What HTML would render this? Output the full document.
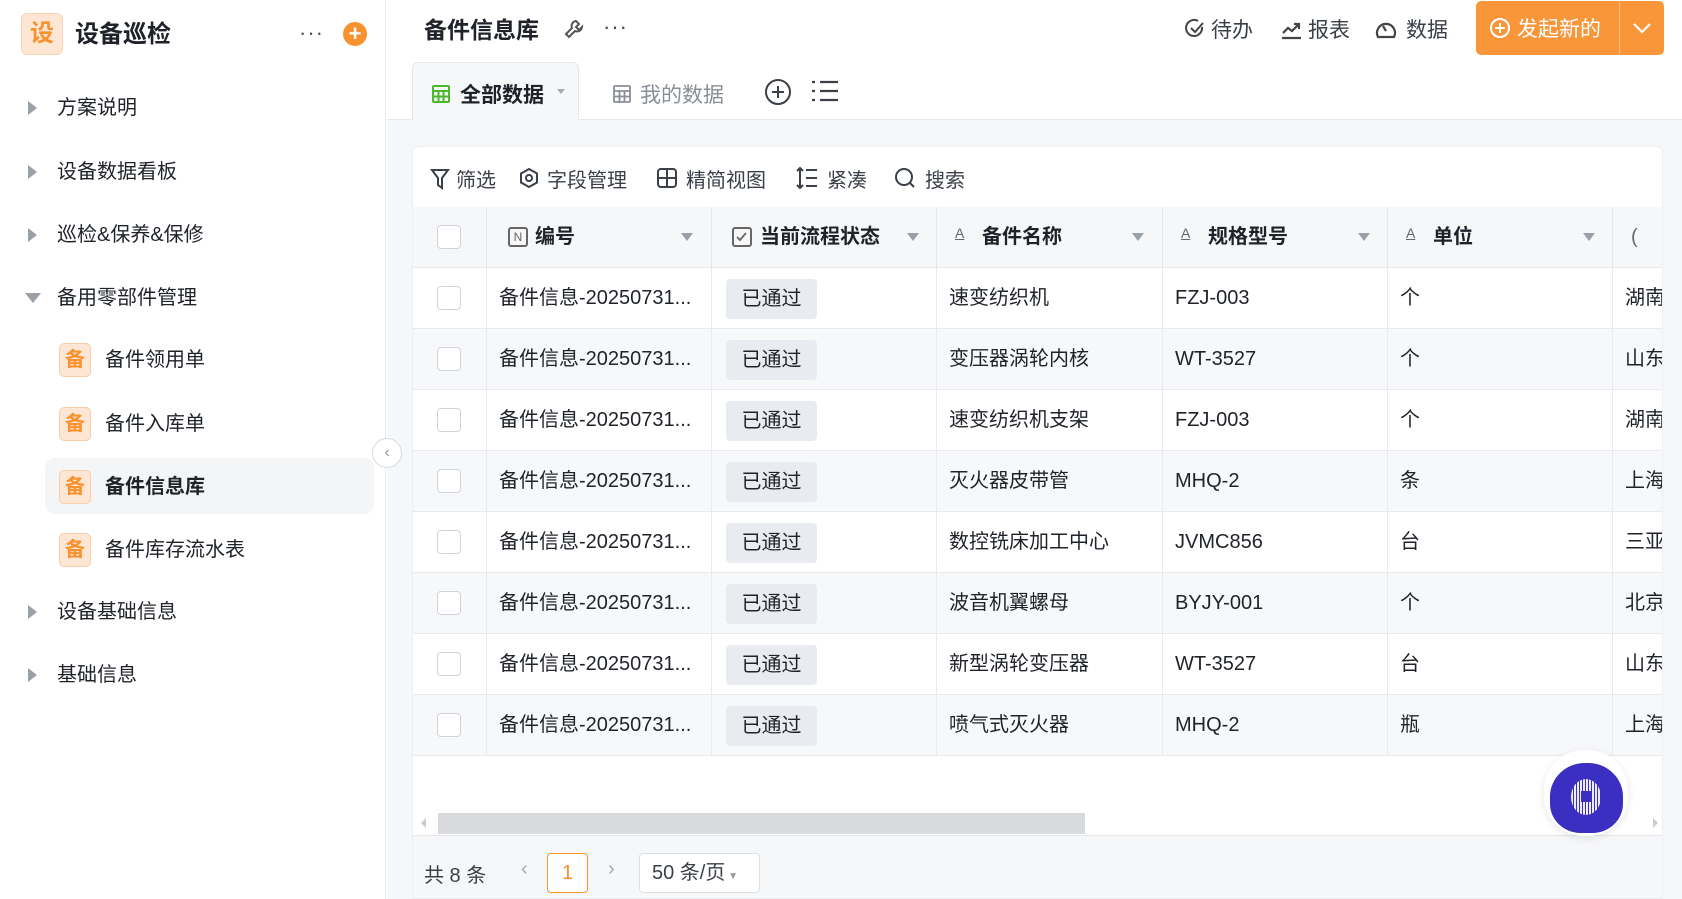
<!DOCTYPE html>
<html><head><meta charset="utf-8"><style>
*{box-sizing:border-box;margin:0;padding:0}
body{width:1682px;height:899px;overflow:hidden;background:#fff;font-family:"Liberation Sans","Noto Sans CJK SC",sans-serif;color:#1f2329;position:relative}
.a{position:absolute;white-space:nowrap}
.side{position:absolute;left:0;top:0;width:386px;height:899px;background:#fff;border-right:1px solid #e8eaed}
.mi{position:absolute;left:0;font-size:20px;color:#1f2329;line-height:28px;white-space:nowrap}
.tri{position:absolute;width:0;height:0;border-top:7px solid transparent;border-bottom:7px solid transparent;border-left:9px solid #9aa0a8}
.bi{position:absolute;left:59px;width:32px;height:34px;border-radius:5px;background:#fde6d3;border:1px solid #f9cfaa;color:#f7922f;font-weight:bold;font-size:20px;text-align:center;line-height:32px}
.main{position:absolute;left:387px;top:0;right:0;height:899px;background:#f6f7f9}
.hd{position:absolute;left:0;top:0;right:0;height:120px;background:#fff;border-bottom:1px solid #e5e7eb}
.card{position:absolute;left:25px;top:146px;width:1251px;height:753px;background:#fff;border:1px solid #eceef1;border-radius:6px 6px 0 0;overflow:hidden}
.tool{font-size:20px;color:#3b4048}
.th{position:absolute;top:60px;height:60px;border-right:1px solid #e5e7eb;background:#f6f7f9;font-size:20px;font-weight:bold;line-height:60px;white-space:nowrap}
.row{position:absolute;left:0;width:1251px;height:61px;border-top:1px solid #e8eaed}
.c{position:absolute;top:0;height:60px;line-height:60px;font-size:20px;color:#1f2329;border-right:1px solid #e8eaed;white-space:nowrap;overflow:hidden}
.cb{position:absolute;width:24px;height:24px;border:1px solid #d0d4da;border-radius:4px;background:#fff}
.tag{position:absolute;left:14px;top:11px;width:91px;height:40px;line-height:40px;background:#e8ebf0;border-radius:4px;text-align:center;font-size:20px}
.dd{position:absolute;top:26px;width:0;height:0;border-left:6px solid transparent;border-right:6px solid transparent;border-top:8px solid #9aa0a8}
.l{left:1200px;width:80px;padding-left:12px;border:none}
</style></head><body>
<div class="side">
  <div class="a" style="left:21px;top:13px;width:42px;height:42px;border-radius:6px;background:#fde6d3;border:1px solid #f9d5b4;color:#f7922f;font-size:24px;font-weight:bold;text-align:center;line-height:40px">设</div>
  <div class="a" style="left:75px;top:19px;font-size:24px;font-weight:bold;line-height:32px">设备巡检</div>
  <div class="a" style="left:299px;top:20px;font-size:22px;color:#555;letter-spacing:1px">···</div>
  <div class="a" style="left:343px;top:22px;width:24px;height:24px;border-radius:50%;background:#f7922f;color:#fff;text-align:center;line-height:24px;font-size:22px;font-weight:bold">+</div>

  <div class="tri" style="left:28px;top:101px"></div><div class="mi" style="left:57px;top:94px">方案说明</div>
  <div class="tri" style="left:28px;top:165px"></div><div class="mi" style="left:57px;top:158px">设备数据看板</div>
  <div class="tri" style="left:28px;top:228px"></div><div class="mi" style="left:57px;top:221px">巡检&amp;保养&amp;保修</div>
  <div class="a" style="left:25px;top:293px;border-left:8px solid transparent;border-right:8px solid transparent;border-top:10px solid #9aa0a8"></div><div class="mi" style="left:57px;top:284px">备用零部件管理</div>

  <div class="bi" style="top:343px">备</div><div class="mi" style="left:105px;top:346px">备件领用单</div>
  <div class="bi" style="top:407px">备</div><div class="mi" style="left:105px;top:410px">备件入库单</div>
  <div class="a" style="left:45px;top:458px;width:329px;height:56px;border-radius:10px;background:#f4f5f7"></div>
  <div class="bi" style="top:470px">备</div><div class="mi" style="left:105px;top:473px;font-weight:bold">备件信息库</div>
  <div class="bi" style="top:533px">备</div><div class="mi" style="left:105px;top:536px">备件库存流水表</div>

  <div class="tri" style="left:28px;top:605px"></div><div class="mi" style="left:57px;top:598px">设备基础信息</div>
  <div class="tri" style="left:28px;top:668px"></div><div class="mi" style="left:57px;top:661px">基础信息</div>
</div>
<div class="a" style="left:372px;top:438px;width:30px;height:30px;border-radius:50%;background:#fff;border:1px solid #d8dbe0;color:#999;text-align:center;line-height:28px;font-size:16px;z-index:5">‹</div>

<div class="main">
  <div class="hd">
    <div class="a" style="left:37px;top:14px;font-size:23px;font-weight:bold;line-height:32px">备件信息库</div>
    <svg class="a" style="left:176px;top:18px" width="22" height="22" viewBox="0 0 22 22" fill="none" stroke="#555" stroke-width="2"><path d="M13 3a5 5 0 0 0-4 7L3 16l3 3 6-6a5 5 0 0 0 7-4l-3 3-3-3 3-3z"/></svg>
    <div class="a" style="left:216px;top:14px;font-size:22px;color:#444;letter-spacing:1px">···</div>

    <svg class="a" style="left:797px;top:18px" width="22" height="22" viewBox="0 0 22 22" fill="none" stroke="#444" stroke-width="2"><path d="M18 9a8 8 0 1 1-4-6"/><path d="M7 10l4 4 8-9"/></svg>
    <div class="a" style="left:824px;top:14px;font-size:21px;color:#3b4048">待办</div>
    <svg class="a" style="left:893px;top:18px" width="22" height="22" viewBox="0 0 22 22" fill="none" stroke="#444" stroke-width="2.2"><path d="M2 20h19M3 15l5-5 4 3 7-7M14 6h5v5"/></svg>
    <div class="a" style="left:921px;top:14px;font-size:21px;color:#3b4048">报表</div>
    <svg class="a" style="left:987px;top:17px" width="24" height="24" viewBox="0 0 24 24" fill="none" stroke="#444" stroke-width="2.2"><path d="M4 20a9 9 0 1 1 16 0z"/><path d="M12 14l-3-5"/></svg>
    <div class="a" style="left:1019px;top:14px;font-size:21px;color:#3b4048">数据</div>

    <div class="a" style="left:1089px;top:1px;width:188px;height:54px;border-radius:5px;background:#f9963a"></div>
    <div class="a" style="left:1232px;top:1px;width:1px;height:54px;background:#fbc08a"></div>
    <svg class="a" style="left:1102px;top:17px" width="22" height="22" viewBox="0 0 22 22" fill="none" stroke="#fff" stroke-width="2"><circle cx="11" cy="11" r="9"/><path d="M11 6v10M6 11h10"/></svg>
    <div class="a" style="left:1130px;top:13px;font-size:21px;color:#fff">发起新的</div>
    <svg class="a" style="left:1244px;top:20px" width="22" height="16" viewBox="0 0 22 16" fill="none" stroke="#fff" stroke-width="2.2"><path d="M3 4l8 8 8-8"/></svg>

    <div class="a" style="left:25px;top:62px;width:167px;height:59px;background:#f6f7f9;border:1px solid #e5e7eb;border-bottom:none;border-radius:6px 6px 0 0"></div>
    <svg class="a" style="left:44px;top:84px" width="20" height="20" viewBox="0 0 20 20" fill="none" stroke="#49b82a" stroke-width="2"><rect x="2" y="2" width="16" height="16" rx="1"/><path d="M2 7h16M2 12.5h16M7.5 7v11M12.5 7v11"/></svg>
    <div class="a" style="left:73px;top:79px;font-size:21px;font-weight:bold">全部数据</div>
    <div class="a" style="left:170px;top:89px;border-left:4px solid transparent;border-right:4px solid transparent;border-top:5px solid #aaa"></div>
    <svg class="a" style="left:225px;top:84px" width="20" height="20" viewBox="0 0 20 20" fill="none" stroke="#8a8f97" stroke-width="1.8"><rect x="2" y="2" width="16" height="16" rx="1"/><path d="M2 7h16M2 12.5h16M7.5 7v11M12.5 7v11"/></svg>
    <div class="a" style="left:253px;top:79px;font-size:21px;color:#8a8f97">我的数据</div>
    <svg class="a" style="left:377px;top:78px" width="28" height="28" viewBox="0 0 28 28" fill="none" stroke="#3b4048" stroke-width="2"><circle cx="14" cy="14" r="12"/><path d="M14 8v12M8 14h12"/></svg>
    <svg class="a" style="left:424px;top:79px" width="28" height="24" viewBox="0 0 28 24" fill="none" stroke="#3b4048" stroke-width="2.2"><path d="M1 3h3M9 3h18M1 12h3M9 12h18M1 21h3M9 21h18"/></svg>
  </div>

  <div class="card">
    <svg class="a" style="left:17px;top:21px" width="20" height="22" viewBox="0 0 20 22" fill="none" stroke="#3b4048" stroke-width="2"><path d="M2 2h16l-6 8v10l-4-3v-7z"/></svg>
    <div class="a tool" style="left:43px;top:17px">筛选</div>
    <svg class="a" style="left:105px;top:20px" width="22" height="22" viewBox="0 0 22 22" fill="none" stroke="#3b4048" stroke-width="2"><path d="M11 2l8 4.5v9L11 20l-8-4.5v-9z"/><circle cx="11" cy="11" r="3"/></svg>
    <div class="a tool" style="left:134px;top:17px">字段管理</div>
    <svg class="a" style="left:243px;top:20px" width="22" height="22" viewBox="0 0 22 22" fill="none" stroke="#3b4048" stroke-width="2"><rect x="2" y="2" width="18" height="18" rx="3"/><path d="M11 2v18M2 11h18"/></svg>
    <div class="a tool" style="left:273px;top:17px">精简视图</div>
    <svg class="a" style="left:383px;top:19px" width="22" height="24" viewBox="0 0 22 24" fill="none" stroke="#3b4048" stroke-width="2"><path d="M4 2v20M1 5l3-3 3 3M1 19l3 3 3-3M10 4h11M10 12h11M10 20h11"/></svg>
    <div class="a tool" style="left:414px;top:17px">紧凑</div>
    <svg class="a" style="left:481px;top:20px" width="22" height="22" viewBox="0 0 22 22" fill="none" stroke="#3b4048" stroke-width="2"><circle cx="10" cy="10" r="8"/><path d="M16 16l4 4"/></svg>
    <div class="a tool" style="left:512px;top:17px">搜索</div>

    <div class="a" style="left:0;top:60px;width:1251px;height:1px;background:#e5e7eb"></div>
    <div class="th" style="left:0;width:74px"><div class="cb" style="left:24px;top:18px"></div></div>
    <div class="th" style="left:74px;width:225px"><div class="a" style="left:21px;top:20px;width:20px;height:20px;border:2px solid #666;border-radius:3px;font-size:12px;line-height:16px;text-align:center;color:#666;font-weight:normal">N</div><span style="position:absolute;left:48px">编号</span><div class="dd" style="left:194px"></div></div>
    <div class="th" style="left:299px;width:225px"><div class="a" style="left:20px;top:20px;width:20px;height:20px;border:2px solid #666;border-radius:3px"></div><svg class="a" style="left:24px;top:25px" width="12" height="10" viewBox="0 0 12 10" fill="none" stroke="#666" stroke-width="1.8"><path d="M1 5l3 3 6-7"/></svg><span style="position:absolute;left:48px">当前流程状态</span><div class="dd" style="left:195px"></div></div>
    <div class="th" style="left:524px;width:226px"><span style="position:absolute;left:18px;top:-4px;font-size:14px;font-weight:normal;color:#666;text-decoration:underline">A</span><span style="position:absolute;left:45px">备件名称</span><div class="dd" style="left:195px"></div></div>
    <div class="th" style="left:750px;width:225px"><span style="position:absolute;left:18px;top:-4px;font-size:14px;font-weight:normal;color:#666;text-decoration:underline">A</span><span style="position:absolute;left:45px">规格型号</span><div class="dd" style="left:195px"></div></div>
    <div class="th" style="left:975px;width:225px"><span style="position:absolute;left:18px;top:-4px;font-size:14px;font-weight:normal;color:#666;text-decoration:underline">A</span><span style="position:absolute;left:45px">单位</span><div class="dd" style="left:195px"></div></div>
    <div class="th" style="left:1200px;width:80px;border-right:none"><span style="position:absolute;left:18px;font-weight:normal;color:#666">(</span></div>

    <div class="row" style="top:120px;background:#fff"><div class="c" style="left:0;width:74px"><div class="cb" style="left:24px;top:18px"></div></div><div class="c" style="left:74px;width:225px;padding-left:12px">备件信息-20250731...</div><div class="c" style="left:299px;width:225px"><div class="tag">已通过</div></div><div class="c" style="left:524px;width:226px;padding-left:12px">速变纺织机</div><div class="c" style="left:750px;width:225px;padding-left:12px">FZJ-003</div><div class="c" style="left:975px;width:225px;padding-left:12px">个</div><div class="c l">湖南</div></div>
    <div class="row" style="top:181px;background:#f7f8fa"><div class="c" style="left:0;width:74px"><div class="cb" style="left:24px;top:18px"></div></div><div class="c" style="left:74px;width:225px;padding-left:12px">备件信息-20250731...</div><div class="c" style="left:299px;width:225px"><div class="tag">已通过</div></div><div class="c" style="left:524px;width:226px;padding-left:12px">变压器涡轮内核</div><div class="c" style="left:750px;width:225px;padding-left:12px">WT-3527</div><div class="c" style="left:975px;width:225px;padding-left:12px">个</div><div class="c l">山东</div></div>
    <div class="row" style="top:242px;background:#fff"><div class="c" style="left:0;width:74px"><div class="cb" style="left:24px;top:18px"></div></div><div class="c" style="left:74px;width:225px;padding-left:12px">备件信息-20250731...</div><div class="c" style="left:299px;width:225px"><div class="tag">已通过</div></div><div class="c" style="left:524px;width:226px;padding-left:12px">速变纺织机支架</div><div class="c" style="left:750px;width:225px;padding-left:12px">FZJ-003</div><div class="c" style="left:975px;width:225px;padding-left:12px">个</div><div class="c l">湖南</div></div>
    <div class="row" style="top:303px;background:#f7f8fa"><div class="c" style="left:0;width:74px"><div class="cb" style="left:24px;top:18px"></div></div><div class="c" style="left:74px;width:225px;padding-left:12px">备件信息-20250731...</div><div class="c" style="left:299px;width:225px"><div class="tag">已通过</div></div><div class="c" style="left:524px;width:226px;padding-left:12px">灭火器皮带管</div><div class="c" style="left:750px;width:225px;padding-left:12px">MHQ-2</div><div class="c" style="left:975px;width:225px;padding-left:12px">条</div><div class="c l">上海</div></div>
    <div class="row" style="top:364px;background:#fff"><div class="c" style="left:0;width:74px"><div class="cb" style="left:24px;top:18px"></div></div><div class="c" style="left:74px;width:225px;padding-left:12px">备件信息-20250731...</div><div class="c" style="left:299px;width:225px"><div class="tag">已通过</div></div><div class="c" style="left:524px;width:226px;padding-left:12px">数控铣床加工中心</div><div class="c" style="left:750px;width:225px;padding-left:12px">JVMC856</div><div class="c" style="left:975px;width:225px;padding-left:12px">台</div><div class="c l">三亚</div></div>
    <div class="row" style="top:425px;background:#f7f8fa"><div class="c" style="left:0;width:74px"><div class="cb" style="left:24px;top:18px"></div></div><div class="c" style="left:74px;width:225px;padding-left:12px">备件信息-20250731...</div><div class="c" style="left:299px;width:225px"><div class="tag">已通过</div></div><div class="c" style="left:524px;width:226px;padding-left:12px">波音机翼螺母</div><div class="c" style="left:750px;width:225px;padding-left:12px">BYJY-001</div><div class="c" style="left:975px;width:225px;padding-left:12px">个</div><div class="c l">北京</div></div>
    <div class="row" style="top:486px;background:#fff"><div class="c" style="left:0;width:74px"><div class="cb" style="left:24px;top:18px"></div></div><div class="c" style="left:74px;width:225px;padding-left:12px">备件信息-20250731...</div><div class="c" style="left:299px;width:225px"><div class="tag">已通过</div></div><div class="c" style="left:524px;width:226px;padding-left:12px">新型涡轮变压器</div><div class="c" style="left:750px;width:225px;padding-left:12px">WT-3527</div><div class="c" style="left:975px;width:225px;padding-left:12px">台</div><div class="c l">山东</div></div>
    <div class="row" style="top:547px;background:#f7f8fa;border-bottom:1px solid #e8eaed;height:62px"><div class="c" style="left:0;width:74px"><div class="cb" style="left:24px;top:18px"></div></div><div class="c" style="left:74px;width:225px;padding-left:12px">备件信息-20250731...</div><div class="c" style="left:299px;width:225px"><div class="tag">已通过</div></div><div class="c" style="left:524px;width:226px;padding-left:12px">喷气式灭火器</div><div class="c" style="left:750px;width:225px;padding-left:12px">MHQ-2</div><div class="c" style="left:975px;width:225px;padding-left:12px">瓶</div><div class="c l">上海</div></div>

    <div class="a" style="left:8px;top:671px;border-top:5px solid transparent;border-bottom:5px solid transparent;border-right:5px solid #ccc"></div>
    <div class="a" style="left:25px;top:666px;width:647px;height:21px;background:#d9dadd"></div>
    <div class="a" style="left:1240px;top:671px;border-top:5px solid transparent;border-bottom:5px solid transparent;border-left:5px solid #ccc"></div>
    <div class="a" style="left:0;top:688px;width:1251px;height:65px;background:#f6f7f9;border-top:1px solid #e5e7eb"></div>
    <div class="a" style="left:11px;top:712px;font-size:20px;color:#3b4048">共 8 条</div>
    <div class="a" style="left:108px;top:711px;font-size:20px;color:#aaa">‹</div>
    <div class="a" style="left:134px;top:706px;width:41px;height:40px;border:1px solid #f7922f;border-radius:4px;background:#fff;color:#f7922f;text-align:center;line-height:38px;font-size:20px">1</div>
    <div class="a" style="left:195px;top:711px;font-size:20px;color:#aaa">›</div>
    <div class="a" style="left:226px;top:706px;width:121px;height:40px;border:1px solid #dcdfe4;border-radius:4px;background:#fff;padding-left:12px;line-height:38px;font-size:20px;color:#3b4048">50 条/页<span style="font-size:10px;color:#999"> ▼</span></div>
  </div>

  <div class="a" style="left:1157px;top:750px;width:84px;height:86px;border-radius:40px;background:#fff;box-shadow:0 2px 8px rgba(0,0,0,.1)"></div>
  <div class="a" style="left:1163px;top:763px;width:73px;height:70px;border-radius:48% 48% 42% 42%;background:#3a2fc0"></div>
  <div class="a" style="left:1184px;top:779px;width:30px;height:36px;border-radius:50%;background:repeating-linear-gradient(90deg,rgba(255,255,255,.9) 0 2px,transparent 2px 3px),#3a2fc0;"></div>
  <div class="a" style="left:1194px;top:791px;width:10px;height:11px;background:#3a2fc0"></div>
</div>
</body></html>
